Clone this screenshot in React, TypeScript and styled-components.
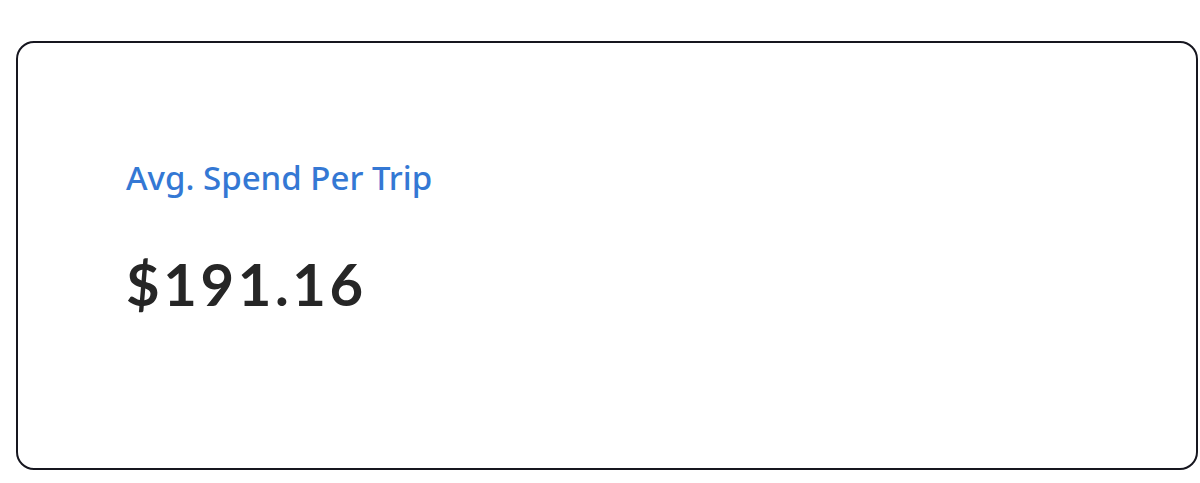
import React from "react";
import styled, { createGlobalStyle } from "styled-components";

const GlobalStyle = createGlobalStyle`
  html, body {
    margin: 0;
    padding: 0;
    background: #ffffff;
  }
  body {
    font-family: "Noto Sans", "Open Sans", sans-serif;
  }
`;

const Page = styled.div`
  padding: 41px 2px 0 16px;
`;

const Card = styled.section`
  box-sizing: border-box;
  height: 429px;
  border: 2px solid #16161f;
  border-radius: 18px;
  padding: 114px 108px 0 108px;
  display: flex;
  flex-direction: column;
  gap: 53px;
`;

const Label = styled.h3`
  margin: 0;
  font-family: "Noto Sans", "Open Sans", sans-serif;
  font-weight: 500;
  font-size: 33px;
  line-height: 42px;
  color: #3478d4;
`;

const Value = styled.div`
  font-family: Lato, "Noto Sans", sans-serif;
  font-weight: 700;
  font-size: 58px;
  line-height: 64px;
  letter-spacing: 3.6px;
  color: #262626;
`;

const StatCard = ({ label, value }: { label: string; value: string }) => (
  <Card>
    <Label>{label}</Label>
    <Value>{value}</Value>
  </Card>
);

export default function App() {
  return (
    <>
      <GlobalStyle />
      <Page>
        <StatCard label="Avg. Spend Per Trip" value="$191.16" />
      </Page>
    </>
  );
}
